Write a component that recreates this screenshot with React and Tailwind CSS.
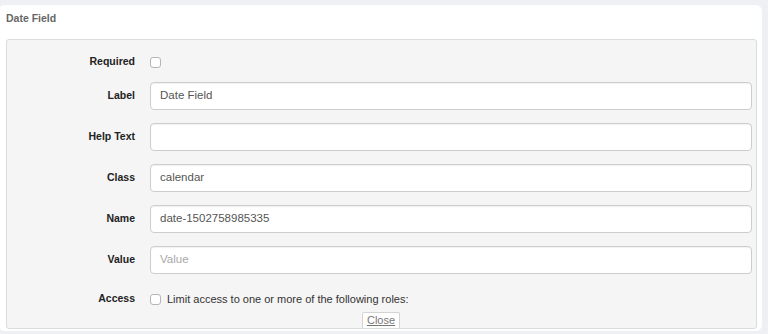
const rows = [
  { label: "Label", value: "Date Field" },
  { label: "Help Text", value: "" },
  { label: "Class", value: "calendar" },
  { label: "Name", value: "date-1502758985335" },
  { label: "Value", value: "", placeholder: "Value" },
];

const Check = () => (
  <span className="block w-[11px] h-[11px] rounded-[3px] border border-[#b5b5b5] bg-white" />
);

const Label = ({ children }) => (
  <div className="w-[128px] shrink-0 text-right text-[10.5px] font-bold text-[#222]">
    {children}
  </div>
);

export default function App() {
  return (
    <div
      className="w-[768px] h-[334px] bg-[#eff0f4] pt-[5px] pr-[6px] pb-[3px] overflow-hidden"
      style={{ fontFamily: '"Liberation Sans", Arial, sans-serif' }}
    >
      <div className="h-full bg-white rounded-r-md rounded-l-sm pl-[6px] pr-[5px] pb-[2px] flex flex-col">
        {/* HEADING */}
        <div className="h-[34px] pt-[6px] text-[10.5px] leading-[14px] font-bold text-[#666]">
          Date Field
        </div>

        {/* PANEL */}
        <div className="flex-1 flex flex-col bg-[#f5f5f5] border border-[#dcdcdc] rounded-[3px] pt-[10px] pr-[4px]">
          <div className="h-[24px] flex items-center">
            <Label>Required</Label>
            <div className="ml-[15px]">
              <Check />
            </div>
          </div>

          {rows.map((r, i) => (
            <div key={r.label} className={`flex items-center ${i === 0 ? "mt-[8px]" : "mt-[13px]"}`}>
              <Label>{r.label}</Label>
              <div className="ml-[15px] flex-1 h-[28px] flex items-center bg-white border border-[#cdcdcd] rounded-[4px] shadow-[inset_0_1px_1px_rgba(0,0,0,0.06)] px-[9px] text-[11.5px] text-[#555]">
                {r.value ? r.value : <span className="text-[#a8a8a8]">{r.placeholder}</span>}
              </div>
            </div>
          ))}

          <div className="h-[24px] mt-[13px] flex items-center">
            <Label>Access</Label>
            <div className="ml-[15px] flex items-center gap-[6px] text-[11px] text-[#333]">
              <Check />
              <span>Limit access to one or more of the following roles:</span>
            </div>
          </div>

          <div className="flex-1 flex items-end justify-center">
            <button className="h-[16px] px-[4px] ml-[3px] bg-white border border-b-0 border-[#d4d4d4] rounded-t-[2px] text-[11px] leading-[15px] text-[#777] underline">
              Close
            </button>
          </div>
        </div>
      </div>
    </div>
  );
}
